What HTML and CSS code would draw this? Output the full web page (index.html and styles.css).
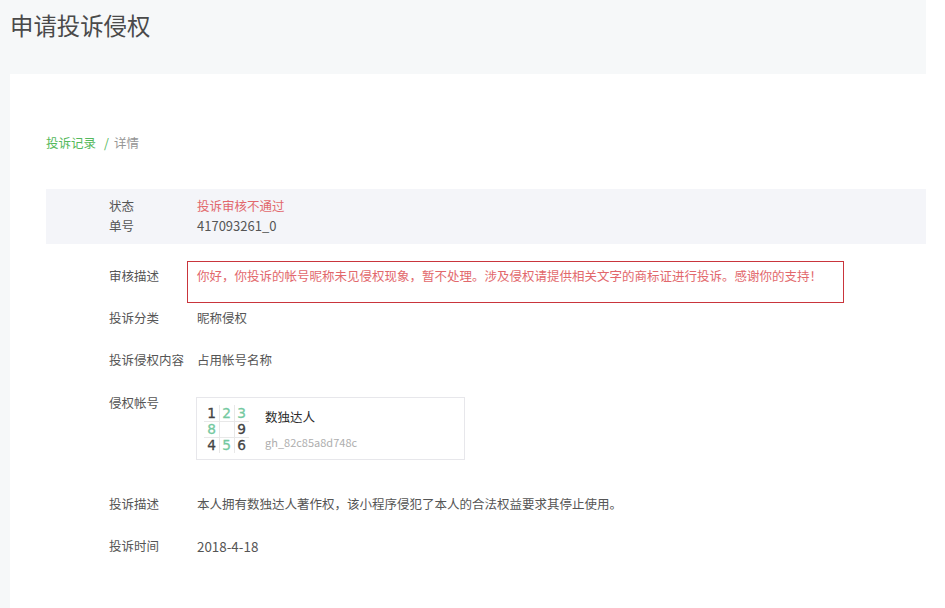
FILE: index.html
```html
<!DOCTYPE html>
<html lang="zh-CN">
<head>
<meta charset="utf-8">
<title>申请投诉侵权</title>
<link rel="stylesheet" href="styles.css">
</head>
<body>
<div class="page">
  <h1 class="title">申请投诉侵权</h1>
  <main class="card">
    <nav class="crumb"><span class="crumb-link">投诉记录</span><span class="crumb-sep">/</span><span class="crumb-cur">详情</span></nav>
    <section class="status">
      <div class="status-row"><span class="label">状态</span><span class="red">投诉审核不通过</span></div>
      <div class="status-row"><span class="label">单号</span><span class="num">417093261_0</span></div>
    </section>
    <div class="row row-audit">
      <span class="label">审核描述</span>
      <div class="audit-box">你好，你投诉的帐号昵称未见侵权现象，暂不处理。涉及侵权请提供相关文字的商标证进行投诉。感谢你的支持！</div>
    </div>
    <div class="row row-cat"><span class="label">投诉分类</span><span class="value">昵称侵权</span></div>
    <div class="row row-content"><span class="label">投诉侵权内容</span><span class="value">占用帐号名称</span></div>
    <div class="row row-account">
      <span class="label">侵权帐号</span>
      <div class="account">
        <div class="sudoku">
          <span>1</span><span class="g">2</span><span class="g">3</span>
          <span class="g">8</span><span></span><span>9</span>
          <span>4</span><span class="g">5</span><span>6</span>
        </div>
        <div class="account-info">
          <div class="account-name">数独达人</div>
          <div class="account-id">gh_82c85a8d748c</div>
        </div>
      </div>
    </div>
    <div class="row row-desc"><span class="label">投诉描述</span><span class="value">本人拥有数独达人著作权，该小程序侵犯了本人的合法权益要求其停止使用。</span></div>
    <div class="row row-time"><span class="label">投诉时间</span><span class="value date">2018-4-18</span></div>
  </main>
</div>
</body>
</html>
```

FILE: styles.css
```css
* { box-sizing: border-box; }
html, body { margin: 0; height: 100%; background: #fff; overflow: hidden; }
body { font-family: "Noto Sans CJK SC", "Noto Sans", sans-serif; font-size: 12.5px; color: #555; }
.page { width: 926px; height: 608px; background: #f6f8f9; padding: 0 0 0 10px; }
.title { margin: 0; height: 74px; padding-top: 8px; font-size: 23.4px; line-height: 34px; font-weight: 400; color: #4a4a4a; }
.card { background: #fff; height: 534px; padding: 60px 0 0 36px; }
.crumb { display: flex; align-items: center; height: 18px; line-height: 18px; }
.crumb-link { color: #55b95c; }
.crumb-sep { color: #55b95c; margin: 0 5px 0 8px; }
.crumb-cur { color: #959595; }
.status { margin-top: 37px; height: 55px; background: #f4f5f9; padding-top: 7px; }
.status-row { display: flex; height: 20px; line-height: 20px; }
.label { flex: none; width: 151px; padding-left: 63px; color: #555; white-space: nowrap; }
.red { color: #e2686c; }
.num { font-size: 13px; }
.row { display: flex; line-height: 20px; }
.value { color: #555; }
.row-audit { margin-top: 17px; }
.row-audit .label { width: 141px; padding-top: 5px; }
.audit-box { width: 657px; height: 42px; border: 1px solid #c9353c; padding: 4px 9px; color: #e2686c; white-space: nowrap; }
.row-cat { margin-top: 5px; }
.row-content { margin-top: 22px; }
.row-account { margin-top: 27px; }
.row-account .label { width: 150px; margin-top: -4px; }
.account { display: flex; align-items: center; width: 269px; height: 63px; border: 1px solid #e7e7eb; padding-left: 7px; }
.sudoku { flex: none; display: grid; grid-template-columns: repeat(3, 15px); grid-auto-rows: 16px; width: 45px; font-family: "DejaVu Sans", sans-serif; font-size: 13.7px; line-height: 16px; text-align: center; color: #444; -webkit-text-stroke: 0.3px currentColor; background-image: linear-gradient(#e8e8e8, #e8e8e8), linear-gradient(#e8e8e8, #e8e8e8), linear-gradient(#e8e8e8, #e8e8e8), linear-gradient(#e8e8e8, #e8e8e8); background-size: 1px 100%, 1px 100%, 100% 1px, 100% 1px; background-position: 15px 0, 30px 0, 0 16px, 0 32px; background-repeat: no-repeat; }
.sudoku .g { color: #74c9a0; }
.account-info { margin-left: 16px; }
.account-name { position: relative; top: 1px; line-height: 18px; color: #2b2b2b; }
.account-id { margin-top: 9px; font-size: 11px; line-height: 16px; color: #aeaeae; }
.row-desc { margin-top: 34px; }
.row-time { margin-top: 22px; }
.date { font-size: 13.4px; }
```
